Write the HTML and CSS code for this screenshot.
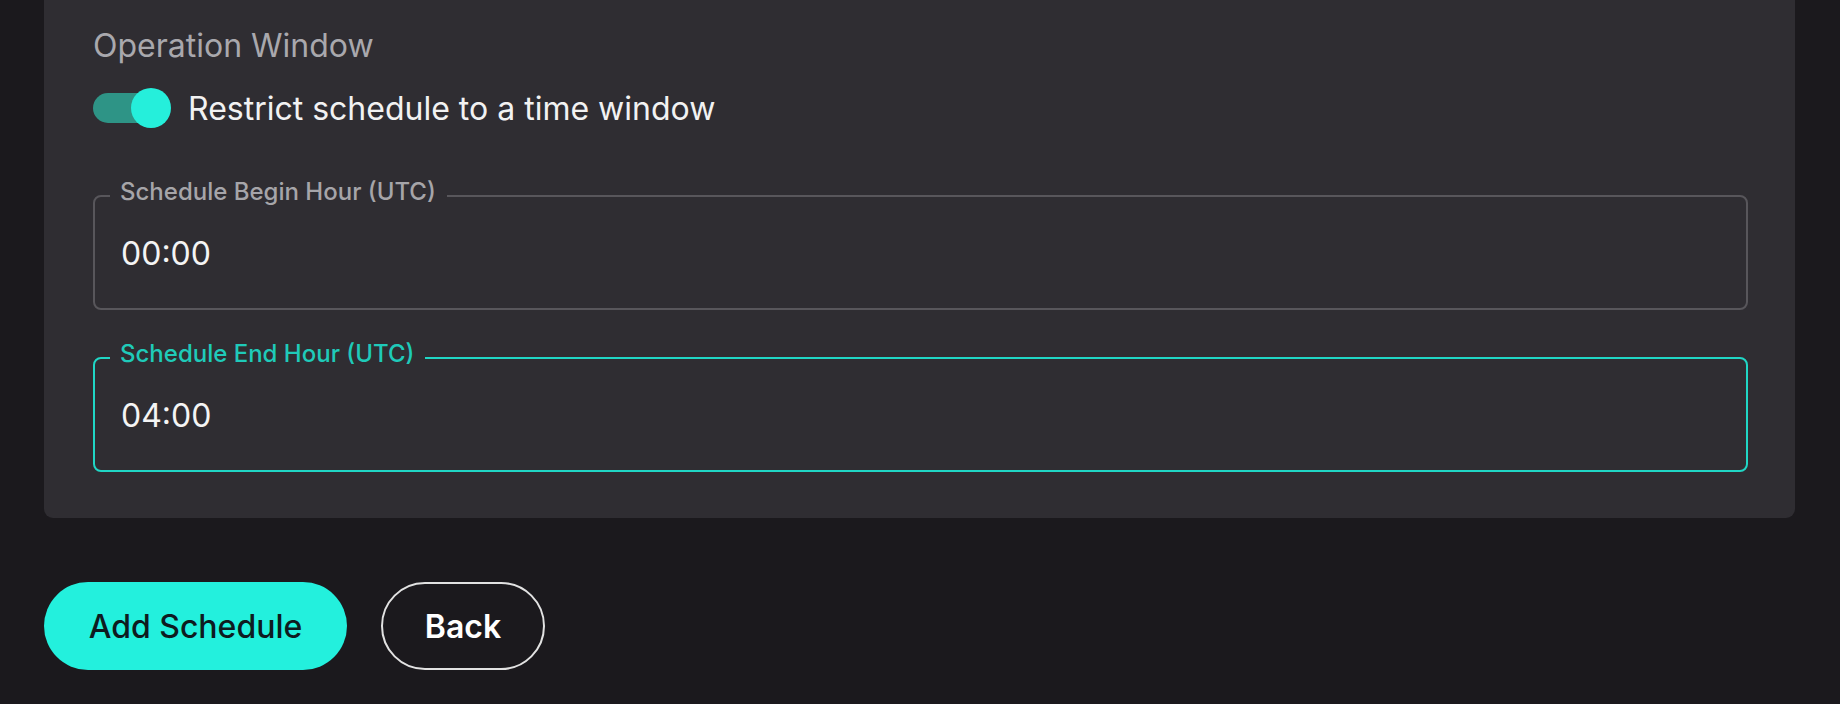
FILE: index.html
```html
<!DOCTYPE html>
<html lang="en">
<head>
<meta charset="utf-8">
<title>Add Schedule</title>
<link rel="stylesheet" href="styles.css">
</head>
<body>
<main class="page">
  <section class="card">
    <div class="section-title">Operation Window</div>
    <label class="toggle-row">
      <span class="switch"><span class="track"></span><span class="knob"></span></span>
      <span class="toggle-text">Restrict schedule to a time window</span>
    </label>
    <fieldset class="field">
      <legend class="field-label">Schedule Begin Hour (UTC)</legend>
      <div class="field-value">00:00</div>
    </fieldset>
    <fieldset class="field field-focused">
      <legend class="field-label">Schedule End Hour (UTC)</legend>
      <div class="field-value">04:00</div>
    </fieldset>
  </section>
  <div class="actions">
    <button class="btn btn-primary">Add Schedule</button>
    <button class="btn btn-outline">Back</button>
  </div>
</main>
</body>
</html>
```

FILE: styles.css
```css
html, body {
  margin: 0;
  padding: 0;
  background: #1b191d;
}

body {
  font-family: "Inter", "Roboto", "Liberation Sans", sans-serif;
  color: #f2f2f2;
  width: 1840px;
  height: 704px;
  overflow: hidden;
}

.page {
  padding: 0 45px 0 44px;
}

.card {
  background: #2f2d32;
  border-radius: 0 0 9px 9px;
  padding: 27px 47px 46px 49px;
  display: flex;
  flex-direction: column;
}

.section-title {
  font-size: 32px;
  line-height: 38px;
  color: #a9a8ad;
}

.toggle-row {
  display: flex;
  align-items: center;
  gap: 17px;
  margin-top: 23px;
  height: 40px;
}

.switch {
  display: flex;
  align-items: center;
  width: 78px;
  height: 40px;
  flex: none;
}

.track {
  width: 62px;
  height: 30px;
  border-radius: 15px;
  background: #2e9486;
}

.knob {
  width: 40px;
  height: 40px;
  border-radius: 50%;
  background: #25efdb;
  margin-left: -24px;
}

.toggle-text {
  font-size: 32px;
  line-height: 38px;
  color: #f2f2f2;
  padding-top: 2px;
}

.field {
  margin: 0;
  border: 2px solid #58565b;
  border-radius: 8px;
  padding: 0 26px 35px 26px;
  min-width: 0;
}

.toggle-row + .field {
  margin-top: 50px;
}

.field + .field {
  margin-top: 30px;
}

.field-label {
  font-size: 24px;
  font-weight: 500;
  line-height: 28px;
  color: #a6a5a9;
  padding: 0 11px 8px 10px;
  margin-left: -11px;
}

.field-value {
  font-size: 32px;
  line-height: 38px;
  color: #f4f4f4;
  padding-top: 21px;
}

.field-focused {
  border-color: #20d6c5;
}

.field-focused .field-label {
  color: #1fcab9;
}

.actions {
  display: flex;
  gap: 34px;
  margin-top: 64px;
}

.btn {
  font-family: "Inter", "Roboto", "Liberation Sans", sans-serif;
  font-size: 32px;
  height: 88px;
  border-radius: 44px;
  cursor: pointer;
}

.btn-primary {
  background: #23f0dd;
  color: #0e1b20;
  border: none;
  padding: 0 40px;
  width: 303px;
  font-weight: 500;
}

.btn-outline {
  background: transparent;
  color: #ffffff;
  border: 2px solid #e2e2e2;
  width: 164px;
  font-weight: 600;
}
```
